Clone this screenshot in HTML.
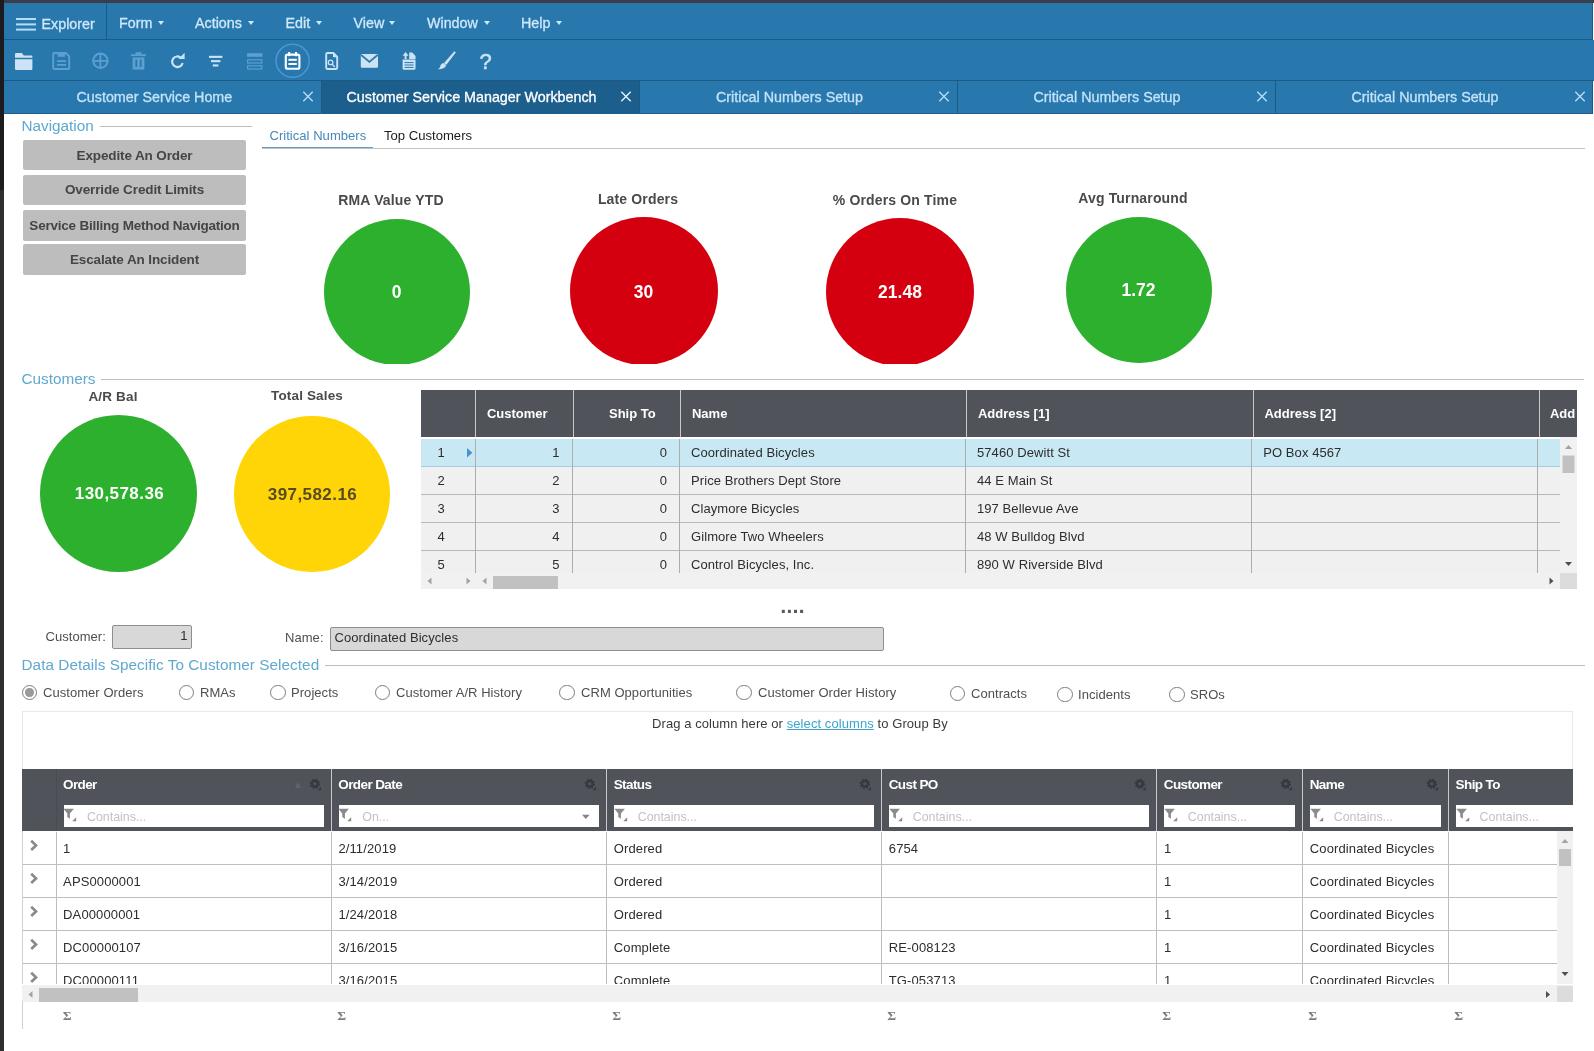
<!DOCTYPE html>
<html lang="en">
<head>
<meta charset="utf-8">
<title>Customer Service Manager Workbench</title>
<style>
*{box-sizing:border-box;margin:0;padding:0}
html,body{width:1594px;height:1051px;overflow:hidden;background:#fff}
body{font-family:"Liberation Sans",sans-serif;color:#222;position:relative}
#app{position:absolute;left:0;top:0;width:1594px;height:1051px;overflow:hidden;background:#fff;will-change:transform}
.abs{position:absolute;white-space:nowrap}
/* frame */
#lb{left:0;top:0;width:4px;height:1051px;background:#2e2e30}
#lb2{left:0;top:0;width:4px;height:190px;background:#1c1c1e}
#tb{left:0;top:0;width:1594px;height:3px;background:#3b3d49}
/* header */
#menubar{left:4px;top:3px;width:1589px;height:37px;background:#2878ae;border-bottom:1px solid #1b5a85;border-right:1px solid #1b5a85}
#toolbar{left:4px;top:40px;width:1590px;height:41px;background:#2878ae;border-bottom:1px solid #1b5a85}
#tabs{left:4px;top:81px;width:1589px;height:33px;background:#2878ae;border-bottom:1px solid #1f5f8c;border-right:1px solid #1b5a85}
.mi{position:absolute;top:2px;-webkit-text-stroke:.3px #cfe8fa;height:36px;line-height:36px;font-size:14.3px;color:#cfe8fa;white-space:nowrap}
.caret{position:absolute;top:17.5px;width:0;height:0;border-left:3px solid transparent;border-right:3px solid transparent;border-top:4px solid #cfe8fa}
.tab{position:absolute;top:0;height:32px;line-height:32px;font-size:14.3px;color:#c3e3f9;-webkit-text-stroke:.3px #c3e3f9;text-align:center;border-right:1px solid #1b5a85}
.tab.on{background:#1d5f8c;color:#fff;-webkit-text-stroke:.3px #fff}
.tab .x{position:absolute;top:8px;width:14px;height:14px}
/* section titles */
.sect{font-size:15.3px;color:#5fa8cf}
.hr{position:absolute;height:1px;background:#bdbdbd}
/* nav buttons */
.nbtn{position:absolute;left:23px;width:223px;background:#bdbdbd;border-radius:2px;color:#454545;font-weight:bold;font-size:13.5px;text-align:center;letter-spacing:-.12px}
/* bubbles */
.bub{position:absolute;border-radius:50%}
.blab{position:absolute;font-weight:bold;font-size:14px;color:#4a4a4a;text-align:center;white-space:nowrap;letter-spacing:.15px}
.bval{position:absolute;font-weight:bold;color:#fff;text-align:center;white-space:nowrap}
/* grid 1 */
#g1{left:421px;top:390px;width:1156px;height:199px;background:#f0f0f0;overflow:hidden}
#g1 .hd{position:absolute;left:0;top:0;height:47px;width:1156px;background:#50535a}
#g1 .hc{position:absolute;top:0;height:47px;line-height:47.5px;color:#fff;font-weight:bold;font-size:13px;border-left:1px solid #c9c9c9;white-space:nowrap}
#g1 .row{position:absolute;left:0;width:1139px;height:28px;border-bottom:1px solid #b8b8b8;background:#f0f0f0}
#g1 .row.sel{background:#c8e9f4;border-bottom-color:#9fd0e4}
#g1 .c{position:absolute;top:0;height:28px;line-height:27.6px;font-size:13px;color:#2d2d2d;white-space:nowrap;border-left:1px solid #adadad;letter-spacing:.08px}
/* grid 2 */
#g2{left:22px;top:769px;width:1551px;height:260px;overflow:hidden}
#g2 .hd{position:absolute;left:0;top:0;height:62px;width:1551px;background:#50535a}
#g2 .hc{position:absolute;top:0;height:62px;border-left:1px solid #c9c9c9;color:#fff;font-weight:bold;font-size:13px;white-space:nowrap}
#g2 .hc span{position:absolute;left:6.5px;top:7.5px;letter-spacing:-.6px;font-size:13.5px}
#g2 .fi{position:absolute;left:7px;top:36px;height:22px;background:#fff;font-size:12.4px;font-weight:normal;color:#c2c2c2;line-height:24.5px;padding-left:23.5px}
#g2 .row{position:absolute;left:0;width:1535px;height:33px;border-bottom:1px solid #bdbdbd;background:#fff}
#g2 .c{position:absolute;top:0;height:33px;line-height:33.6px;font-size:13px;color:#2d2d2d;white-space:nowrap;border-left:1px solid #bdbdbd;padding-left:6.6px;letter-spacing:.12px}
.sig{position:absolute;margin-left:.7px;font-weight:bold;top:1007.6px;font-family:"Liberation Serif","DejaVu Serif",serif;font-size:13.5px;line-height:16px;color:#7c7c7c}
/* radio */
.rad{position:absolute;width:15.4px;height:15.4px;border:1px solid #7c7c7c;border-radius:50%;background:#fff}
.rlab{position:absolute;font-size:13px;color:#4f4f4f;white-space:nowrap;letter-spacing:.05px}
</style>
</head>
<body>
<div id="app">
<div id="tb" class="abs"></div>
<div id="menubar" class="abs">
<svg class="abs" style="left:12px;top:15px" width="20" height="13" viewBox="0 0 20 13"><rect x="0" y="0" width="20" height="2" fill="#b5ddf8"/><rect x="0" y="5.4" width="20" height="2" fill="#b5ddf8"/><rect x="0" y="10.6" width="20" height="2" fill="#b5ddf8"/></svg>
<div class="mi" id="m0" style="left:37.5px;top:3px">Explorer</div>
<div class="abs" style="left:102px;top:0;width:1px;height:36px;background:#1b5a85"></div>
<div class="mi" id="m1" style="left:115px">Form</div><div class="caret" style="left:154px"></div>
<div class="mi" id="m2" style="left:191px">Actions</div><div class="caret" style="left:244px"></div>
<div class="mi" id="m3" style="left:281.5px">Edit</div><div class="caret" style="left:312px"></div>
<div class="mi" id="m4" style="left:349.5px">View</div><div class="caret" style="left:385px"></div>
<div class="mi" id="m5" style="left:423px">Window</div><div class="caret" style="left:480px"></div>
<div class="mi" id="m6" style="left:517px">Help</div><div class="caret" style="left:552px"></div>
</div>
<div id="toolbar" class="abs">
<svg class="abs" style="left:-4px;top:-40px" width="520" height="82" viewBox="0 0 520 82">
<!-- folder -->
<path d="M15 54.2 q0-1.2 1.2-1.2 h5.6 l2 2.4 h7.4 q1.2 0 1.2 1.2 v1.2 h-17.4z" fill="#cbe3f5"/>
<path d="M15 59.2 h17.4 v9.6 q0 1.2-1.2 1.2 h-15 q-1.2 0-1.2-1.2z" fill="#cbe3f5"/>
<!-- save (disabled) -->
<path d="M54.2 53 h11.6 l3.4 3.4 v11.6 q0 1-1 1 h-14 q-1 0-1-1 v-14 q0-1 1-1z" fill="none" stroke="#5c9fd1" stroke-width="1.9" stroke-linejoin="round"/>
<rect x="57.6" y="52.4" width="7.4" height="4.4" fill="#5c9fd1"/>
<rect x="57" y="60.2" width="9" height="1.8" fill="#5c9fd1"/><rect x="57" y="64" width="9" height="1.8" fill="#5c9fd1"/>
<!-- circle plus (disabled) -->
<circle cx="100.4" cy="60.8" r="7.2" fill="none" stroke="#5c9fd1" stroke-width="2"/>
<path d="M100.4 54.2v13.2M93.8 60.8h13.2" stroke="#5c9fd1" stroke-width="1.8" fill="none"/>
<!-- trash (disabled) -->
<rect x="131" y="54.2" width="15" height="1.9" fill="#5c9fd1"/>
<rect x="135.6" y="52.2" width="5.8" height="2.4" fill="#5c9fd1"/>
<path d="M132.6 57.6 h11.8 v10.8 q0 1.2-1.2 1.2 h-9.4 q-1.2 0-1.2-1.2z" fill="#5c9fd1"/>
<rect x="135.4" y="59.6" width="1.8" height="7.4" fill="#2878ae"/><rect x="139.8" y="59.6" width="1.8" height="7.4" fill="#2878ae"/>
<!-- refresh -->
<path d="M181 57.800 A5.300 5.300 0 1 0 182.600 63" fill="none" stroke="#cbe3f5" stroke-width="2.200"/>
<path d="M178.400 59 L184.600 59 L184.600 52.800z" fill="#cbe3f5"/>
<!-- filter -->
<rect x="209" y="55.8" width="13.4" height="2.1" fill="#cbe3f5"/><rect x="211" y="60.1" width="9.4" height="2.1" fill="#cbe3f5"/><rect x="212.8" y="64.4" width="5.6" height="2.1" fill="#cbe3f5"/>
<!-- rows (disabled) -->
<rect x="247" y="53.2" width="15.4" height="3.6" fill="#5c9fd1"/>
<rect x="247.6" y="59.8" width="14.2" height="3.2" fill="none" stroke="#5c9fd1" stroke-width="1.2"/>
<rect x="247.6" y="65.8" width="14.2" height="3.2" fill="none" stroke="#5c9fd1" stroke-width="1.2"/>
<!-- calendar active -->
<circle cx="292.6" cy="60.8" r="16.6" fill="none" stroke="#4b96cf" stroke-width="1.6"/>
<rect x="285.8" y="54.6" width="13.6" height="14.2" rx="1.8" fill="none" stroke="#ffffff" stroke-width="2.1"/>
<rect x="288.2" y="52" width="2" height="4.2" fill="#ffffff"/><rect x="295" y="52" width="2" height="4.2" fill="#ffffff"/>
<rect x="288.4" y="58.8" width="8.4" height="2" fill="#ffffff"/><rect x="288.4" y="63" width="8.4" height="2" fill="#ffffff"/>
<!-- doc search -->
<path d="M327.4 53 h6 l3.8 3.8 v11 q0 1.2-1.2 1.2 h-8.6 q-1.2 0-1.2-1.2 v-13.6 q0-1.2 1.2-1.2z" fill="none" stroke="#cbe3f5" stroke-width="1.9" stroke-linejoin="round"/>
<path d="M333 52.6 v4.6 h4.4z" fill="#cbe3f5"/>
<circle cx="330.6" cy="62.4" r="2.3" fill="none" stroke="#cbe3f5" stroke-width="1.3"/><path d="M332.2 64.2l2.6 2.8" stroke="#cbe3f5" stroke-width="1.4"/>
<!-- mail -->
<path d="M360.8 55.2 q0-1.2 1.2-1.2 h14.8 q1.2 0 1.2 1.2 v11.4 q0 1.2-1.2 1.2 h-14.8 q-1.2 0-1.2-1.2z" fill="#cbe3f5"/>
<path d="M361.2 55 l8.2 7 l8.2-7" fill="none" stroke="#2878ae" stroke-width="1.7"/>
<!-- export doc -->
<path d="M402.6 59.6 h12.9 v9 q0 1.1-1.1 1.1 h-10.7 q-1.1 0-1.1-1.1z" fill="#cbe3f5"/>
<path d="M409.2 52.6 h3 l3.3 3.3 v3 h-6.3z" fill="#cbe3f5"/>
<path d="M405.6 52 l3 3.8 h-2 v3.2 h-2 v-3.2 h-2z" fill="#cbe3f5"/>
<path d="M404.6 62.6h9M404.6 65h9M404.6 67.4h9" stroke="#2878ae" stroke-width="1"/>
<!-- brush -->
<path d="M454.400 51.200 L455.800 52.400 L446.200 65 L444 63z" fill="#cbe3f5"/>
<path d="M443.6 63 l2.6 2.4 q-1.4 3.6-8.2 3.8 q2.6-1.600 2.400-3.600 q0.800-2.600 3.200-2.600z" fill="#cbe3f5"/>
</svg>
<div class="abs" id="qm" style="left:475.400px;top:10.600px;font-size:22px;line-height:22px;color:#cbe3f5;-webkit-text-stroke:.5px #cbe3f5">?</div>
</div>
<div id="tabs" class="abs">
<div class="tab" style="left:0;width:318px"><span id="t1" class="abs" style="left:72.5px">Customer Service Home</span><svg class="x" style="left:297px" viewBox="0 0 14 14"><path d="M2.300 2.800L11.700 12.200M11.700 2.800L2.300 12.200" stroke="#b5dcf7" stroke-width="1.400" fill="none"/></svg></div>
<div class="tab on" style="left:318px;width:318px"><span id="t2" class="abs" style="left:24.5px">Customer Service Manager Workbench</span><svg class="x" style="left:297px" viewBox="0 0 14 14"><path d="M2.300 2.800L11.700 12.200M11.700 2.800L2.300 12.200" stroke="#e3f1fb" stroke-width="1.400" fill="none"/></svg></div>
<div class="tab" style="left:636px;width:318px"><span id="t3" class="abs" style="left:76px">Critical Numbers Setup</span><svg class="x" style="left:297px" viewBox="0 0 14 14"><path d="M2.300 2.800L11.700 12.200M11.700 2.800L2.300 12.200" stroke="#b5dcf7" stroke-width="1.400" fill="none"/></svg></div>
<div class="tab" style="left:954px;width:318px"><span id="t4" class="abs" style="left:75.5px">Critical Numbers Setup</span><svg class="x" style="left:297px" viewBox="0 0 14 14"><path d="M2.300 2.800L11.700 12.200M11.700 2.800L2.300 12.200" stroke="#b5dcf7" stroke-width="1.400" fill="none"/></svg></div>
<div class="tab" style="left:1272px;width:316px;border-right:0"><span id="t5" class="abs" style="left:75.5px">Critical Numbers Setup</span><svg class="x" style="left:297px" viewBox="0 0 14 14"><path d="M2.300 2.800L11.700 12.200M11.700 2.800L2.300 12.200" stroke="#b5dcf7" stroke-width="1.400" fill="none"/></svg></div>
</div>

<!-- Navigation -->
<div class="abs sect" id="s1" style="left:21.5px;top:117px">Navigation</div>
<div class="hr" style="left:100px;top:126px;width:152px"></div>
<div class="nbtn" id="nb1" style="top:140.4px;height:30px;line-height:31px">Expedite An Order</div>
<div class="nbtn" id="nb2" style="top:175.2px;height:29.4px;line-height:29.5px">Override Credit Limits</div>
<div class="nbtn" id="nb3" style="top:210.4px;height:30.2px;line-height:32px;letter-spacing:-.22px">Service Billing Method Navigation</div>
<div class="nbtn" id="nb4" style="top:244.4px;height:30.4px;line-height:32px">Escalate An Incident</div>
<!-- inner tabs -->
<div class="abs" id="it1" style="left:269.5px;top:127.6px;font-size:13.1px;color:#4689b9;line-height:16px">Critical Numbers</div>
<div class="abs" id="it2" style="left:384px;top:127.6px;font-size:13.1px;color:#1d1d1d;line-height:16px">Top Customers</div>
<div class="hr" style="left:262px;top:148px;width:1323px;background:#c4c4c4"></div>
<div class="hr" style="left:262px;top:146.8px;width:111px;height:1.7px;background:#5b9cbf"></div>
<!-- bubbles row 1 -->
<div class="abs" style="left:262px;top:150px;width:1323px;height:214px;overflow:hidden">
<div class="bub" style="left:61.5px;top:68.5px;width:146px;height:146px;background:#2eb02f"></div>
<div class="bub" style="left:307.5px;top:67px;width:148px;height:148px;background:#d5000f"></div>
<div class="bub" style="left:564px;top:68px;width:148px;height:148px;background:#d5000f"></div>
<div class="bub" style="left:803.5px;top:66.5px;width:146px;height:146px;background:#2eb02f"></div>
</div>
<div class="blab" id="bl1" style="left:291px;width:200px;top:192px;line-height:16px">RMA Value YTD</div>
<div class="blab" id="bl2" style="left:538px;width:200px;top:191px;line-height:16px">Late Orders</div>
<div class="blab" id="bl3" style="left:795px;width:200px;top:192px;line-height:16px">% Orders On Time</div>
<div class="blab" id="bl4" style="left:1033px;width:200px;top:190px;line-height:16px">Avg Turnaround</div>
<div class="bval" id="bv1" style="left:346.5px;width:100px;top:282px;line-height:20px;font-size:17.5px">0</div>
<div class="bval" id="bv2" style="left:593.5px;width:100px;top:282px;line-height:20px;font-size:17.5px">30</div>
<div class="bval" id="bv3" style="left:850px;width:100px;top:282px;line-height:20px;font-size:17.5px">21.48</div>
<div class="bval" id="bv4" style="left:1088.5px;width:100px;top:280px;line-height:20px;font-size:17.5px">1.72</div>
<!-- Customers -->
<div class="hr" style="left:101px;top:379px;width:1483px"></div>
<div class="abs sect" id="s2" style="left:21.5px;top:369.5px">Customers</div>
<div class="blab" id="bl5" style="left:13px;width:200px;top:389px;line-height:16px;font-size:13.5px">A/R Bal</div>
<div class="blab" id="bl6" style="left:207px;width:200px;top:388px;line-height:16px;font-size:13.5px">Total Sales</div>
<div class="bub" style="left:40px;top:414.5px;width:157px;height:157px;background:#2eb02f"></div>
<div class="bub" style="left:233.5px;top:415.5px;width:156.5px;height:156.5px;background:#ffd507"></div>
<div class="bval" id="bv5" style="left:19.5px;width:200px;top:484px;line-height:20px;font-size:17px;letter-spacing:.42px">130,578.36</div>
<div class="bval" id="bv6" style="left:212.5px;width:200px;top:484.700px;line-height:20px;font-size:17px;letter-spacing:.42px;color:#574b22">397,582.16</div>
<div id="g1" class="abs">
<div class="hd">
<div class="hc" style="left:53.6px;width:97.9px"><span class="abs" style="left:11.4px">Customer</span></div>
<div class="hc" style="left:151.5px;width:107.6px"><span class="abs" style="left:35.5px">Ship To</span></div>
<div class="hc" style="left:259.1px;width:285.7px"><span class="abs" style="left:10.9px">Name</span></div>
<div class="hc" style="left:544.8px;width:287.1px"><span class="abs" style="left:11.2px">Address [1]</span></div>
<div class="hc" style="left:831.9px;width:285.9px"><span class="abs" style="left:10.6px">Address [2]</span></div>
<div class="hc" style="left:1117.8px;width:282.2px"><span class="abs" style="left:10.2px">Add</span></div>
</div>
<div class="abs" style="left:0;top:47px;width:1139px;height:2px;background:#fff"></div>
<div class="row sel" style="top:48.5px">
<div class="c" style="left:0;width:53.6px;border-left:0"><span class="abs" style="left:16.5px">1</span></div>
<div class="c" style="left:53.6px;width:97.5px;text-align:right;padding-right:12.6px">1</div>
<div class="c" style="left:151.1px;width:106.9px;text-align:right;padding-right:12px">0</div>
<div class="c" style="left:258px;width:286px;padding-left:11px">Coordinated Bicycles</div>
<div class="c" style="left:544px;width:286.1px;padding-left:11px">57460 Dewitt St</div>
<div class="c" style="left:830.1px;width:286.2px;padding-left:11.1px">PO Box 4567</div>
<div class="c" style="left:1116.3px;width:22.7px"></div>
</div>
<div class="row" style="top:76.5px">
<div class="c" style="left:0;width:53.6px;border-left:0"><span class="abs" style="left:16.5px">2</span></div>
<div class="c" style="left:53.6px;width:97.5px;text-align:right;padding-right:12.6px">2</div>
<div class="c" style="left:151.1px;width:106.9px;text-align:right;padding-right:12px">0</div>
<div class="c" style="left:258px;width:286px;padding-left:11px">Price Brothers Dept Store</div>
<div class="c" style="left:544px;width:286.1px;padding-left:11px">44 E Main St</div>
<div class="c" style="left:830.1px;width:286.2px;padding-left:11.1px"></div>
<div class="c" style="left:1116.3px;width:22.7px"></div>
</div>
<div class="row" style="top:104.5px">
<div class="c" style="left:0;width:53.6px;border-left:0"><span class="abs" style="left:16.5px">3</span></div>
<div class="c" style="left:53.6px;width:97.5px;text-align:right;padding-right:12.6px">3</div>
<div class="c" style="left:151.1px;width:106.9px;text-align:right;padding-right:12px">0</div>
<div class="c" style="left:258px;width:286px;padding-left:11px">Claymore Bicycles</div>
<div class="c" style="left:544px;width:286.1px;padding-left:11px">197 Bellevue Ave</div>
<div class="c" style="left:830.1px;width:286.2px;padding-left:11.1px"></div>
<div class="c" style="left:1116.3px;width:22.7px"></div>
</div>
<div class="row" style="top:132.5px">
<div class="c" style="left:0;width:53.6px;border-left:0"><span class="abs" style="left:16.5px">4</span></div>
<div class="c" style="left:53.6px;width:97.5px;text-align:right;padding-right:12.6px">4</div>
<div class="c" style="left:151.1px;width:106.9px;text-align:right;padding-right:12px">0</div>
<div class="c" style="left:258px;width:286px;padding-left:11px">Gilmore Two Wheelers</div>
<div class="c" style="left:544px;width:286.1px;padding-left:11px">48 W Bulldog Blvd</div>
<div class="c" style="left:830.1px;width:286.2px;padding-left:11.1px"></div>
<div class="c" style="left:1116.3px;width:22.7px"></div>
</div>
<div class="row" style="top:160.5px">
<div class="c" style="left:0;width:53.6px;border-left:0"><span class="abs" style="left:16.5px">5</span></div>
<div class="c" style="left:53.6px;width:97.5px;text-align:right;padding-right:12.6px">5</div>
<div class="c" style="left:151.1px;width:106.9px;text-align:right;padding-right:12px">0</div>
<div class="c" style="left:258px;width:286px;padding-left:11px">Control Bicycles, Inc.</div>
<div class="c" style="left:544px;width:286.1px;padding-left:11px">890 W Riverside Blvd</div>
<div class="c" style="left:830.1px;width:286.2px;padding-left:11.1px"></div>
<div class="c" style="left:1116.3px;width:22.7px"></div>
</div>
<svg class="abs" style="left:46px;top:57.5px" width="6" height="10" viewBox="0 0 6 10"><path d="M0 0L5.400 4.800L0 9.600z" fill="#4a92cd"/></svg>
<div class="abs" style="left:1139px;top:47px;width:17px;height:136px;background:#f1f1f1"></div>
<svg class="abs" style="left:1139px;top:47px" width="17" height="136" viewBox="0 0 17 136"><path d="M5 12L8.500 8L12 12z" fill="#a3a3a3"/><rect x="2.500" y="18.500" width="12" height="17.500" fill="#c1c1c1"/><path d="M5 125L8.500 129L12 125z" fill="#505050"/></svg>
<div class="abs" style="left:0;top:183px;width:1156px;height:16px;background:#f1f1f1"></div>
<svg class="abs" style="left:0;top:183px" width="1156" height="16" viewBox="0 0 1156 16"><path d="M10.500 4.500L6.500 8L10.500 11.500z" fill="#a3a3a3"/><path d="M45.500 4.500L49.500 8L45.500 11.500z" fill="#a3a3a3"/><path d="M65.500 4.500L61.500 8L65.500 11.500z" fill="#a3a3a3"/><rect x="72" y="3" width="65" height="13" fill="#c1c1c1"/><path d="M1128.500 4.500L1132.500 8L1128.500 11.500z" fill="#505050"/><rect x="1139" y="0" width="17" height="16" fill="#dcdcdc"/></svg>
</div>
<!-- splitter dots -->
<svg class="abs" style="left:781px;top:609px" width="24" height="5" viewBox="0 0 24 5"><rect x="0.800" y="0.800" width="3" height="3.200" fill="#5a5a5a"/><rect x="6.900" y="0.800" width="3" height="3.200" fill="#5a5a5a"/><rect x="13" y="0.800" width="3" height="3.200" fill="#5a5a5a"/><rect x="19.100" y="0.800" width="3" height="3.200" fill="#5a5a5a"/></svg>
<!-- form row -->
<div class="rlab" id="f1" style="left:45.5px;top:629px;line-height:16px">Customer:</div>
<div class="abs" style="left:112px;top:624.5px;width:80px;height:24px;background:#d8d8d8;border:1px solid #8e8e8e;border-radius:2px"></div>
<div class="abs" id="f2" style="left:150px;width:37.5px;text-align:right;top:628px;line-height:16px;font-size:13px;color:#2d2d2d">1</div>
<div class="rlab" id="f3" style="left:285px;top:630px;line-height:16px">Name:</div>
<div class="abs" style="left:330px;top:626.5px;width:554px;height:24px;background:#d8d8d8;border:1px solid #8e8e8e;border-radius:2px"></div>
<div class="abs" id="f4" style="left:334.5px;top:630px;line-height:16px;font-size:13px;color:#2d2d2d;letter-spacing:.08px">Coordinated Bicycles</div>
<!-- data details -->
<div class="hr" style="left:325px;top:665px;width:1260px"></div>
<div class="abs sect" id="s3" style="left:21.5px;top:655.5px;letter-spacing:.05px">Data Details Specific To Customer Selected</div>
<div class="rad" style="left:21.9px;top:684.6px"><div class="abs" style="left:2.6px;top:2.6px;width:8.4px;height:8.4px;border-radius:50%;background:#9a9a9a"></div></div><div class="rlab" id="r0" style="left:43px;top:684.5px;line-height:16px">Customer Orders</div>
<div class="rad" style="left:178.8px;top:684.6px"></div><div class="rlab" id="r1" style="left:200px;top:684.5px;line-height:16px">RMAs</div>
<div class="rad" style="left:270.3px;top:684.6px"></div><div class="rlab" id="r2" style="left:291px;top:684.5px;line-height:16px">Projects</div>
<div class="rad" style="left:374.8px;top:684.6px"></div><div class="rlab" id="r3" style="left:396px;top:684.5px;line-height:16px">Customer A/R History</div>
<div class="rad" style="left:559.3px;top:684.6px"></div><div class="rlab" id="r4" style="left:581px;top:684.5px;line-height:16px">CRM Opportunities</div>
<div class="rad" style="left:736.3px;top:684.6px"></div><div class="rlab" id="r5" style="left:758px;top:684.5px;line-height:16px">Customer Order History</div>
<div class="rad" style="left:949.8px;top:685.6px"></div><div class="rlab" id="r6" style="left:971px;top:685.5px;line-height:16px">Contracts</div>
<div class="rad" style="left:1057.3px;top:686.6px"></div><div class="rlab" id="r7" style="left:1078px;top:686.5px;line-height:16px">Incidents</div>
<div class="rad" style="left:1169.3px;top:686.6px"></div><div class="rlab" id="r8" style="left:1190px;top:686.5px;line-height:16px">SROs</div>
<!-- group panel -->
<div class="abs" style="left:22px;top:710.5px;width:1551px;height:59px;border:1px solid #e9e9e9;border-bottom:0"></div>
<div class="abs" id="gp" style="left:652px;top:715.5px;line-height:16px;font-size:13px;color:#3a3a3a;letter-spacing:.08px">Drag a column here or <span style="color:#3aa5cf;text-decoration:underline">select columns</span> to Group By</div>
<div id="g2" class="abs">
<div class="hd">
<div class="hc" style="left:33.5px;width:275.3px;border-left-color:#494c53"><span>Order</span>
<svg class="abs" style="left:251.3px;top:9px" width="14" height="14" viewBox="0 0 14 14"><circle cx="6.800" cy="5.800" r="2.900" fill="none" stroke="#35383e" stroke-width="2.300"/><circle cx="6.800" cy="5.800" r="4.500" fill="none" stroke="#35383e" stroke-width="1.400" stroke-dasharray="1.800 1.730"/><path d="M13 8.800v3.400h-3.400z" fill="#35383e"/></svg>
<svg class="abs" style="left:237.3px;top:12px" width="8" height="8" viewBox="0 0 8 8"><path d="M1 7L4 1L7 7z" fill="#5f636b"/></svg>
<div class="fi" style="width:260.5px"><svg class="abs" style="left:-0.4px;top:3.2px" width="15" height="14" viewBox="0 0 15 14"><path d="M0.300 0.800h10.600l-4 4.800v5.200l-2.600-1.800v-3.400z" fill="#8a8a8a"/><path d="M13.200 9.300v4h-4z" fill="#8a8a8a"/></svg>Contains...
</div></div>
<div class="hc" style="left:308.8px;width:275.4px"><span>Order Date</span>
<svg class="abs" style="left:251.4px;top:9px" width="14" height="14" viewBox="0 0 14 14"><circle cx="6.800" cy="5.800" r="2.900" fill="none" stroke="#35383e" stroke-width="2.300"/><circle cx="6.800" cy="5.800" r="4.500" fill="none" stroke="#35383e" stroke-width="1.400" stroke-dasharray="1.800 1.730"/><path d="M13 8.800v3.400h-3.400z" fill="#35383e"/></svg>
<div class="fi" style="width:260.6px"><svg class="abs" style="left:-0.4px;top:3.2px" width="15" height="14" viewBox="0 0 15 14"><path d="M0.300 0.800h10.600l-4 4.800v5.200l-2.600-1.800v-3.400z" fill="#8a8a8a"/><path d="M13.200 9.300v4h-4z" fill="#8a8a8a"/></svg>On...
<svg class="abs" style="left:242.4px;top:9px" width="10" height="6" viewBox="0 0 10 6"><path d="M1 0.800h7.600l-3.800 4.200z" fill="#858585"/></svg>
</div></div>
<div class="hc" style="left:584.2px;width:275.0px"><span>Status</span>
<svg class="abs" style="left:251.0px;top:9px" width="14" height="14" viewBox="0 0 14 14"><circle cx="6.800" cy="5.800" r="2.900" fill="none" stroke="#35383e" stroke-width="2.300"/><circle cx="6.800" cy="5.800" r="4.500" fill="none" stroke="#35383e" stroke-width="1.400" stroke-dasharray="1.800 1.730"/><path d="M13 8.800v3.400h-3.400z" fill="#35383e"/></svg>
<div class="fi" style="width:260.2px"><svg class="abs" style="left:-0.4px;top:3.2px" width="15" height="14" viewBox="0 0 15 14"><path d="M0.300 0.800h10.600l-4 4.800v5.200l-2.600-1.800v-3.400z" fill="#8a8a8a"/><path d="M13.200 9.300v4h-4z" fill="#8a8a8a"/></svg>Contains...
</div></div>
<div class="hc" style="left:859.2px;width:275.1px"><span>Cust PO</span>
<svg class="abs" style="left:251.1px;top:9px" width="14" height="14" viewBox="0 0 14 14"><circle cx="6.800" cy="5.800" r="2.900" fill="none" stroke="#35383e" stroke-width="2.300"/><circle cx="6.800" cy="5.800" r="4.500" fill="none" stroke="#35383e" stroke-width="1.400" stroke-dasharray="1.800 1.730"/><path d="M13 8.800v3.400h-3.400z" fill="#35383e"/></svg>
<div class="fi" style="width:260.3px"><svg class="abs" style="left:-0.4px;top:3.2px" width="15" height="14" viewBox="0 0 15 14"><path d="M0.300 0.800h10.600l-4 4.800v5.200l-2.600-1.800v-3.400z" fill="#8a8a8a"/><path d="M13.200 9.300v4h-4z" fill="#8a8a8a"/></svg>Contains...
</div></div>
<div class="hc" style="left:1134.3px;width:145.9px"><span>Customer</span>
<svg class="abs" style="left:121.9px;top:9px" width="14" height="14" viewBox="0 0 14 14"><circle cx="6.800" cy="5.800" r="2.900" fill="none" stroke="#35383e" stroke-width="2.300"/><circle cx="6.800" cy="5.800" r="4.500" fill="none" stroke="#35383e" stroke-width="1.400" stroke-dasharray="1.800 1.730"/><path d="M13 8.800v3.400h-3.400z" fill="#35383e"/></svg>
<div class="fi" style="width:131.1px"><svg class="abs" style="left:-0.4px;top:3.2px" width="15" height="14" viewBox="0 0 15 14"><path d="M0.300 0.800h10.600l-4 4.800v5.200l-2.600-1.800v-3.400z" fill="#8a8a8a"/><path d="M13.200 9.300v4h-4z" fill="#8a8a8a"/></svg>Contains...
</div></div>
<div class="hc" style="left:1280.2px;width:145.9px"><span>Name</span>
<svg class="abs" style="left:121.9px;top:9px" width="14" height="14" viewBox="0 0 14 14"><circle cx="6.800" cy="5.800" r="2.900" fill="none" stroke="#35383e" stroke-width="2.300"/><circle cx="6.800" cy="5.800" r="4.500" fill="none" stroke="#35383e" stroke-width="1.400" stroke-dasharray="1.800 1.730"/><path d="M13 8.800v3.400h-3.400z" fill="#35383e"/></svg>
<div class="fi" style="width:131.1px"><svg class="abs" style="left:-0.4px;top:3.2px" width="15" height="14" viewBox="0 0 15 14"><path d="M0.300 0.800h10.600l-4 4.800v5.200l-2.600-1.800v-3.400z" fill="#8a8a8a"/><path d="M13.200 9.300v4h-4z" fill="#8a8a8a"/></svg>Contains...
</div></div>
<div class="hc" style="left:1426.1px;width:173.9px"><span>Ship To</span>
<div class="fi" style="width:199.2px"><svg class="abs" style="left:-0.4px;top:3.2px" width="15" height="14" viewBox="0 0 15 14"><path d="M0.300 0.800h10.600l-4 4.800v5.200l-2.600-1.800v-3.400z" fill="#8a8a8a"/><path d="M13.200 9.300v4h-4z" fill="#8a8a8a"/></svg>Contains...
</div></div>
</div>
<div class="abs" style="left:0;top:62px;width:1535px;height:153px;overflow:hidden;border-left:1px solid #d0d0d0;padding-top:1px"><div class="abs" style="left:0;top:1px;width:1535px;height:160px">
<div class="row" style="top:0px"><svg class="abs" style="left:5.600px;top:6.800px" width="11" height="13" viewBox="0 0 11 13"><path d="M2.200 1.800L7 6.400L2.200 11" fill="none" stroke="#8a8a8a" stroke-width="2.700"/></svg>
<div class="c" style="left:32.5px;width:275.3px">1</div>
<div class="c" style="left:307.8px;width:275.4px">2/11/2019</div>
<div class="c" style="left:583.2px;width:275.0px">Ordered</div>
<div class="c" style="left:858.2px;width:275.1px">6754</div>
<div class="c" style="left:1133.3px;width:145.9px">1</div>
<div class="c" style="left:1279.2px;width:145.9px">Coordinated Bicycles</div>
<div class="c" style="left:1425.1px;width:120px"></div>
</div>
<div class="row" style="top:33px"><svg class="abs" style="left:5.600px;top:6.800px" width="11" height="13" viewBox="0 0 11 13"><path d="M2.200 1.800L7 6.400L2.200 11" fill="none" stroke="#8a8a8a" stroke-width="2.700"/></svg>
<div class="c" style="left:32.5px;width:275.3px">APS0000001</div>
<div class="c" style="left:307.8px;width:275.4px">3/14/2019</div>
<div class="c" style="left:583.2px;width:275.0px">Ordered</div>
<div class="c" style="left:858.2px;width:275.1px"></div>
<div class="c" style="left:1133.3px;width:145.9px">1</div>
<div class="c" style="left:1279.2px;width:145.9px">Coordinated Bicycles</div>
<div class="c" style="left:1425.1px;width:120px"></div>
</div>
<div class="row" style="top:66px"><svg class="abs" style="left:5.600px;top:6.800px" width="11" height="13" viewBox="0 0 11 13"><path d="M2.200 1.800L7 6.400L2.200 11" fill="none" stroke="#8a8a8a" stroke-width="2.700"/></svg>
<div class="c" style="left:32.5px;width:275.3px">DA00000001</div>
<div class="c" style="left:307.8px;width:275.4px">1/24/2018</div>
<div class="c" style="left:583.2px;width:275.0px">Ordered</div>
<div class="c" style="left:858.2px;width:275.1px"></div>
<div class="c" style="left:1133.3px;width:145.9px">1</div>
<div class="c" style="left:1279.2px;width:145.9px">Coordinated Bicycles</div>
<div class="c" style="left:1425.1px;width:120px"></div>
</div>
<div class="row" style="top:99px"><svg class="abs" style="left:5.600px;top:6.800px" width="11" height="13" viewBox="0 0 11 13"><path d="M2.200 1.800L7 6.400L2.200 11" fill="none" stroke="#8a8a8a" stroke-width="2.700"/></svg>
<div class="c" style="left:32.5px;width:275.3px">DC00000107</div>
<div class="c" style="left:307.8px;width:275.4px">3/16/2015</div>
<div class="c" style="left:583.2px;width:275.0px">Complete</div>
<div class="c" style="left:858.2px;width:275.1px">RE-008123</div>
<div class="c" style="left:1133.3px;width:145.9px">1</div>
<div class="c" style="left:1279.2px;width:145.9px">Coordinated Bicycles</div>
<div class="c" style="left:1425.1px;width:120px"></div>
</div>
<div class="row" style="top:132px"><svg class="abs" style="left:5.600px;top:6.800px" width="11" height="13" viewBox="0 0 11 13"><path d="M2.200 1.800L7 6.400L2.200 11" fill="none" stroke="#8a8a8a" stroke-width="2.700"/></svg>
<div class="c" style="left:32.5px;width:275.3px">DC00000111</div>
<div class="c" style="left:307.8px;width:275.4px">3/16/2015</div>
<div class="c" style="left:583.2px;width:275.0px">Complete</div>
<div class="c" style="left:858.2px;width:275.1px">TG-053713</div>
<div class="c" style="left:1133.3px;width:145.9px">1</div>
<div class="c" style="left:1279.2px;width:145.9px">Coordinated Bicycles</div>
<div class="c" style="left:1425.1px;width:120px"></div>
</div>
</div></div>
<div class="abs" style="left:1535px;top:62px;width:16px;height:153px;background:#f1f1f1"></div>
<svg class="abs" style="left:1535px;top:62px" width="16" height="153" viewBox="0 0 16 153"><path d="M4.500 12L8 8L11.500 12z" fill="#a3a3a3"/><rect x="2" y="18" width="12" height="17" fill="#c1c1c1"/><path d="M4.500 141L8 145L11.500 141z" fill="#505050"/></svg>
<div class="abs" style="left:0;top:215.5px;width:1551px;height:17.5px;background:#f1f1f1"></div>
<svg class="abs" style="left:0;top:217px" width="1551" height="17" viewBox="0 0 1551 17"><path d="M10.500 5L6.500 8.500L10.500 12z" fill="#a3a3a3"/><rect x="17" y="2" width="99" height="14" fill="#c1c1c1"/><path d="M1524 5L1528 8.500L1524 12z" fill="#505050"/><rect x="1535" y="-1.500" width="16" height="17.500" fill="#dcdcdc"/></svg>
<div class="abs" style="left:0;top:232px;width:1px;height:28px;background:#d0d0d0"></div>
</div>
<div class="sig" style="left:62px">&Sigma;</div>
<div class="sig" style="left:336.5px">&Sigma;</div>
<div class="sig" style="left:611.5px">&Sigma;</div>
<div class="sig" style="left:886.5px">&Sigma;</div>
<div class="sig" style="left:1161.5px">&Sigma;</div>
<div class="sig" style="left:1307.5px">&Sigma;</div>
<div class="sig" style="left:1453.5px">&Sigma;</div>
<div id="lb" class="abs"></div>
<div id="lb2" class="abs"></div>
</div>
</body>
</html>
